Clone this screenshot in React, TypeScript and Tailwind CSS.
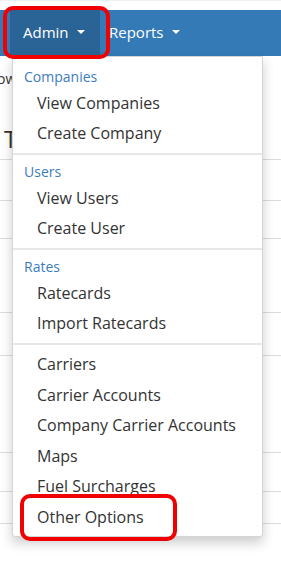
import React from "react";

const Caret = () => (
  <span className="ml-[8px] inline-block h-0 w-0 border-x-[4px] border-t-[4px] border-x-transparent border-t-white align-middle" />
);

const Header = ({ label }: { label: string }) => (
  <div className="flex h-[23px] items-center pl-[11px] text-[14px] text-[#3c7dc0]">{label}</div>
);

const Item = ({ label, tall }: { label: string; tall?: boolean }) => (
  <div
    className={
      tall
        ? "flex h-[30.5px] items-center pl-[24px] text-[16px] text-[#333]"
        : "flex h-[30px] items-center pl-[24px] text-[16px] text-[#333]"
    }
  >
    {label}
  </div>
);

const Divider = ({ last }: { last?: boolean }) => (
  <div className={last ? "mt-[5px] mb-[4px] h-[2px] bg-[#e7e7e7]" : "my-[5px] h-[2px] bg-[#e7e7e7]"} />
);

export default function App() {
  return (
    <div className="relative h-[561px] w-[281px] overflow-hidden bg-white font-['Open_Sans',sans-serif]">
      <div className="h-[10px] border-t border-[#f0f0f0] bg-white" />
      <nav className="flex h-[46px] items-stretch bg-[#337ab7] pl-[10px] text-[15px] text-white">
        <div className="flex w-[90px] items-center bg-[#2a6395] pl-[13px] pb-[2px]">
          Admin
          <Caret />
        </div>
        <div className="flex items-center pl-[9px] pb-[2px]">
          Reports
          <Caret />
        </div>
      </nav>

      {/* page content behind the menu */}
      <div className="flex flex-col text-[#333]">
        <div className="h-[104px] border-b border-[#dcdcdc]">
          <div className="-ml-[3px] mt-[12px] text-[14px]">ow</div>
          <div className="ml-[4px] mt-[38px] text-[24px] leading-none">Tr</div>
        </div>
        <div className="h-[41px] border-b border-[#dcdcdc]" />
        <div className="h-[38px] border-b border-[#dcdcdc]" />
        <div className="h-[74px] border-b border-[#dcdcdc]" />
        <div className="h-[43px] border-b border-[#dcdcdc]" />
        <div className="h-[97px] border-b border-[#dcdcdc]" />
        <div className="h-[39px] border-b border-[#dcdcdc]" />
        <div className="h-[32px] border-b border-[#dcdcdc]" />
      </div>

      {/* dropdown menu */}
      <div className="absolute left-[12px] top-[56px] w-[251px] rounded-b-[3px] border border-[#d5d5d5] bg-white pt-[8px] pb-[4px] shadow-[0_6px_12px_rgba(0,0,0,0.2)]">
        <Header label="Companies" />
        <Item label="View Companies" />
        <Item label="Create Company" />
        <Divider />
        <Header label="Users" />
        <Item label="View Users" />
        <Item label="Create User" />
        <Divider />
        <Header label="Rates" />
        <Item label="Ratecards" />
        <Item label="Import Ratecards" />
        <Divider last />
        <Item tall label="Carriers" />
        <Item tall label="Carrier Accounts" />
        <Item tall label="Company Carrier Accounts" />
        <Item tall label="Maps" />
        <Item tall label="Fuel Surcharges" />
        <Item tall label="Other Options" />
      </div>

      {/* red highlight annotations */}
      <div className="absolute left-[3px] top-[6px] h-[53px] w-[107px] rounded-[10px] border-[4px] border-[#f00000]" />
      <div className="absolute left-[20px] top-[494px] h-[47px] w-[157px] rounded-[10px] border-[4px] border-[#f00000]" />
    </div>
  );
}
